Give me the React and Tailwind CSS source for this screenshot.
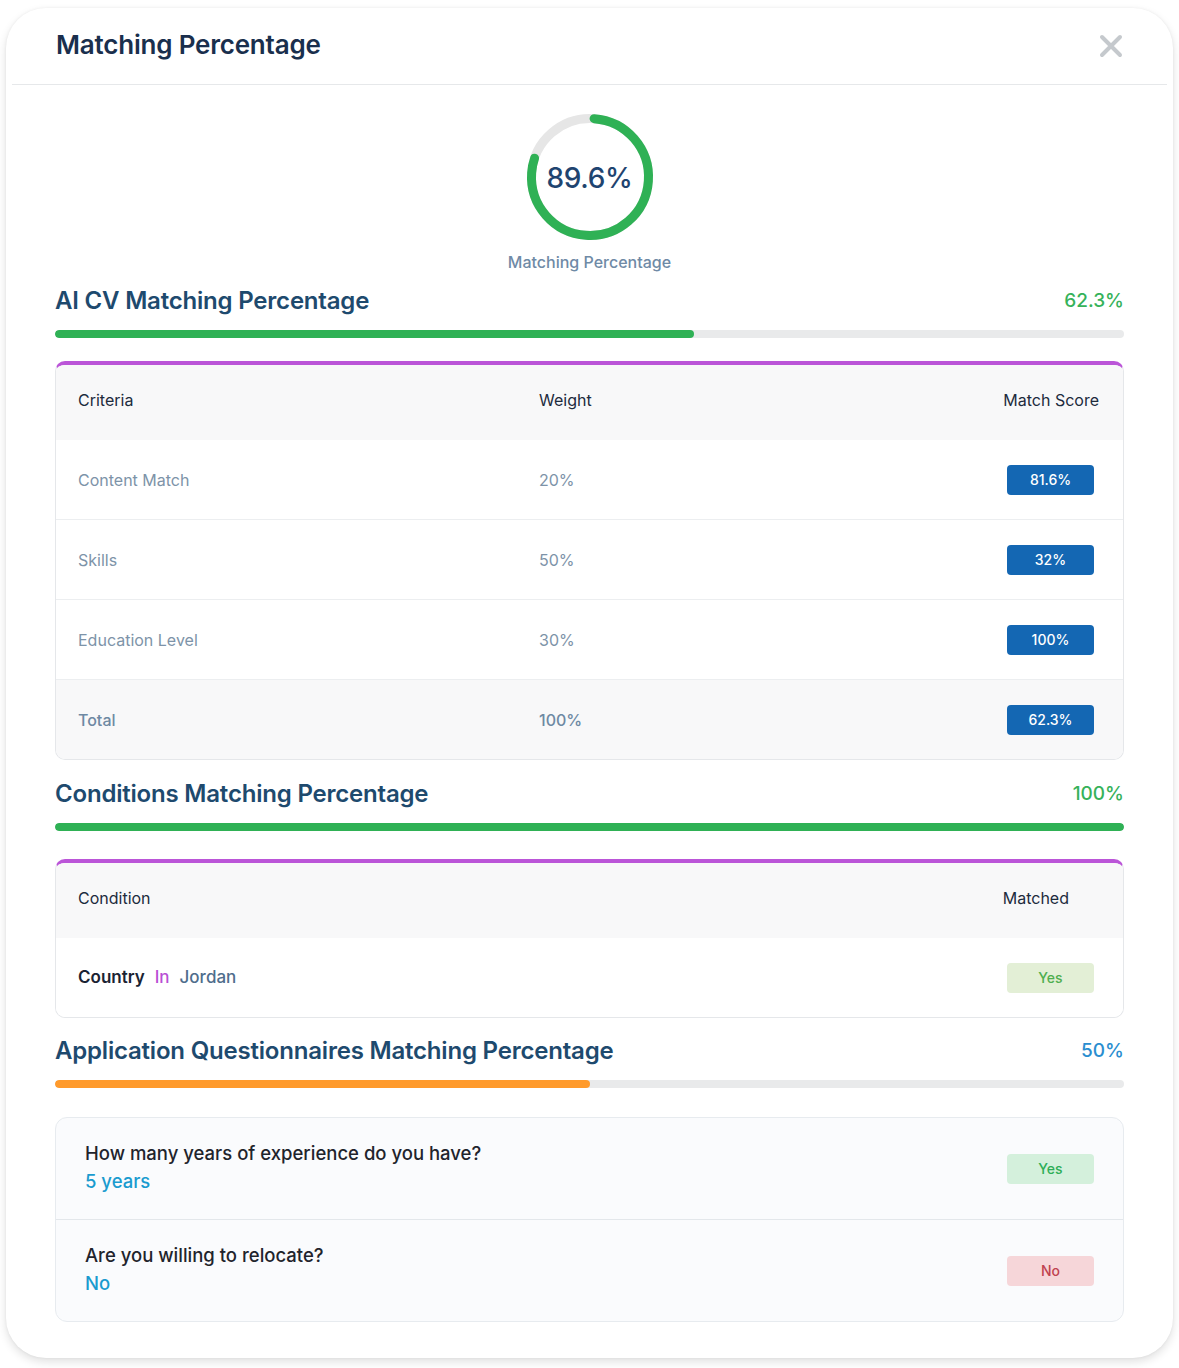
import React from "react";

const criteria = [
  { name: "Content Match", weight: "20%", score: "81.6%" },
  { name: "Skills", weight: "50%", score: "32%" },
  { name: "Education Level", weight: "30%", score: "100%" },
];

function Donut({ value, arc }) {
  const r = 58.5;
  const c = 2 * Math.PI * r;
  return (
    <div className="relative w-[130px] h-[130px]">
      <svg width="130" height="130" viewBox="0 0 130 130" className="rotate-[-86deg]">
        <circle cx="65" cy="65" r={r} fill="none" stroke="#e6e6e6" strokeWidth="9" />
        <circle
          cx="65"
          cy="65"
          r={r}
          fill="none"
          stroke="#2fb155"
          strokeWidth="9"
          strokeLinecap="round"
          strokeDasharray={`${arc * c} ${c}`}
        />
      </svg>
      <div className="absolute inset-0 flex items-center justify-center pt-[2px] text-[28px] font-medium text-[#1f4470] tracking-[-0.3px]">
        {value}%
      </div>
    </div>
  );
}

function SectionHeader({ title, value, valueColor, barColor, fill }) {
  return (
    <div>
      <div className="flex items-center justify-between h-[34px]">
        <h2 className="text-[24px] font-semibold text-[#1e4a6e] tracking-[-0.2px]">{title}</h2>
        <span className={`text-[19px] font-medium ${valueColor}`}>{value}</span>
      </div>
      <div className="mt-[12px] h-[8px] rounded-full bg-[#e9eaeb] overflow-hidden">
        <div className={`h-full rounded-full ${barColor}`} style={{ width: `${fill}%` }} />
      </div>
    </div>
  );
}

function Badge({ children }) {
  return (
    <span className="inline-flex items-center justify-center w-[87px] h-[30px] rounded-[4px] bg-[#1467b3] text-white text-[14px] font-medium">
      {children}
    </span>
  );
}

function SoftBadge({ children, cls }) {
  return (
    <span className={`inline-flex items-center justify-center w-[87px] h-[30px] rounded-[4px] text-[14px] font-medium ${cls}`}>
      {children}
    </span>
  );
}

export default function App() {
  return (
    <div className="bg-white min-h-[1368px] pt-[8px] px-[6px] font-['Inter','Liberation_Sans',sans-serif]">
      <div className="bg-white rounded-[40px] shadow-[0_4px_10px_rgba(0,0,0,0.12),0_0_3px_rgba(0,0,0,0.06)] h-[1350px] overflow-hidden">
        {/* header */}
        <div className="mx-[6px] h-[77px] border-b border-[#e6e8ea] flex items-center justify-between pl-[44px] pr-[40px]">
          <h1 className="pb-[4px] text-[26px] font-semibold text-[#1a2f4d] tracking-[-0.2px]">Matching Percentage</h1>
          <svg width="24" height="24" viewBox="0 0 24 24" className="mr-[4px]">
            <path d="M3 3 L21 21 M21 3 L3 21" stroke="#c5c9cd" strokeWidth="4" strokeLinecap="round" />
          </svg>
        </div>

        <div className="px-[49px]">
          {/* overall */}
          <div className="flex flex-col items-center pt-[27px]">
            <Donut value={89.6} arc={0.79} />
            <div className="mt-[8px] text-[16px] font-medium text-[#6f8aa6]">Matching Percentage</div>
          </div>

          {/* AI CV */}
          <div className="mt-[10px]">
            <SectionHeader
              title="AI CV Matching Percentage"
              value="62.3%"
              valueColor="text-[#36b25a]"
              barColor="bg-[#2fb155]"
              fill={59.8}
            />
          </div>

          <div className="mt-[23px] rounded-[10px] border border-[#e5e7ea] border-t-[4px] border-t-[#bb55d8] overflow-hidden">
            <div className="grid grid-cols-[461px_1fr_auto] items-center h-[75px] bg-[#f8f8f9] pl-[22px] pr-[24px] pb-[5px] text-[16px] text-[#1d2b3d]">
              <span>Criteria</span>
              <span>Weight</span>
              <span>Match Score</span>
            </div>
            {criteria.map((c) => (
              <div
                key={c.name}
                className="grid grid-cols-[461px_1fr_auto] items-center h-[80px] border-b border-[#eceef0] bg-white pl-[22px] pr-[29px] text-[16px] text-[#7d93a8]"
              >
                <span>{c.name}</span>
                <span>{c.weight}</span>
                <Badge>{c.score}</Badge>
              </div>
            ))}
            <div className="grid grid-cols-[461px_1fr_auto] items-center h-[79px] bg-[#f8f8f9] pl-[22px] pr-[29px] text-[16px] font-medium text-[#6e89a3]">
              <span>Total</span>
              <span>100%</span>
              <Badge>62.3%</Badge>
            </div>
          </div>

          {/* Conditions */}
          <div className="mt-[17px]">
            <SectionHeader
              title="Conditions Matching Percentage"
              value="100%"
              valueColor="text-[#36b25a]"
              barColor="bg-[#2fb155]"
              fill={100}
            />
          </div>

          <div className="mt-[28px] rounded-[10px] border border-[#e5e7ea] border-t-[4px] border-t-[#bb55d8] overflow-hidden">
            <div className="flex items-center justify-between h-[75px] bg-[#f8f8f9] pl-[22px] pr-[54px] pb-[5px] text-[16px] text-[#1d2b3d]">
              <span>Condition</span>
              <span>Matched</span>
            </div>
            <div className="flex items-center justify-between h-[79px] bg-white pl-[22px] pr-[29px] text-[17px] font-medium">
              <span className="flex gap-[10px]">
                <span className="text-[#1a2333] font-semibold">Country</span>
                <span className="text-[#b94fd4]">In</span>
                <span className="text-[#4f6d8c]">Jordan</span>
              </span>
              <SoftBadge cls="bg-[#e3efd6] text-[#4fae4f]">Yes</SoftBadge>
            </div>
          </div>

          {/* Questionnaires */}
          <div className="mt-[16px]">
            <SectionHeader
              title="Application Questionnaires Matching Percentage"
              value="50%"
              valueColor="text-[#2a8ed0]"
              barColor="bg-[#ff9a2b]"
              fill={50}
            />
          </div>

          <div className="mt-[29px] rounded-[12px] border border-[#e7ebef] bg-[#fafbfd] overflow-hidden">
            <div className="flex items-center justify-between h-[102px] border-b border-[#e3e7eb] pl-[29px] pr-[29px]">
              <div className="flex flex-col pb-[2px]">
                <span className="text-[18.5px] font-medium text-[#1f242c]">How many years of experience do you have?</span>
                <span className="text-[18.5px] font-medium text-[#1a9bcf]">5 years</span>
              </div>
              <SoftBadge cls="bg-[#d4f0dc] text-[#2eae57]">Yes</SoftBadge>
            </div>
            <div className="flex items-center justify-between h-[101px] pl-[29px] pr-[29px]">
              <div className="flex flex-col pb-[2px]">
                <span className="text-[18.5px] font-medium text-[#1f242c]">Are you willing to relocate?</span>
                <span className="text-[18.5px] font-medium text-[#1a9bcf]">No</span>
              </div>
              <SoftBadge cls="bg-[#f6d6d9] text-[#c0424f]">No</SoftBadge>
            </div>
          </div>
        </div>
      </div>
    </div>
  );
}
